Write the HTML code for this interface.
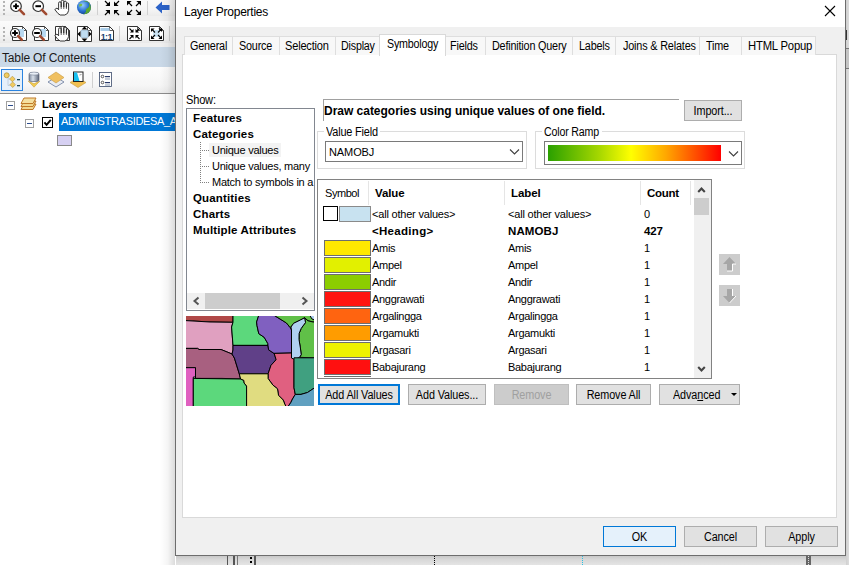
<!DOCTYPE html>
<html><head><meta charset="utf-8">
<style>
*{box-sizing:border-box}
html,body{margin:0;padding:0}
body{width:849px;height:565px;position:relative;overflow:hidden;background:#fff;font-family:"Liberation Sans",sans-serif;font-size:11px;color:#000}
.a{position:absolute}
svg.a{overflow:hidden}
.t{position:absolute;white-space:nowrap;line-height:12px}
</style></head><body>
<div class="a" style="left:0px;top:0px;width:176px;height:565px;background:#fff"></div>
<div class="a" style="left:0px;top:0px;width:176px;height:16px;background:linear-gradient(#fafafa,#f5f5f5 60%,#ebebeb)"></div>
<div class="a" style="left:0px;top:16px;width:176px;height:5px;background:#f0f0f0"></div>
<div class="a" style="left:0px;top:21px;width:176px;height:22px;background:linear-gradient(#fbfbfb,#f5f5f5 60%,#e9e9e9)"></div>
<div class="a" style="left:0px;top:43px;width:176px;height:4px;background:#f0f0f0"></div>
<div class="a" style="left:3px;top:1px;width:2px;height:2px;background:#b4b4b4"></div>
<div class="a" style="left:3px;top:5px;width:2px;height:2px;background:#b4b4b4"></div>
<div class="a" style="left:3px;top:9px;width:2px;height:2px;background:#b4b4b4"></div>
<div class="a" style="left:3px;top:13px;width:2px;height:2px;background:#b4b4b4"></div>
<div class="a" style="left:3px;top:27px;width:2px;height:2px;background:#b4b4b4"></div>
<div class="a" style="left:3px;top:31px;width:2px;height:2px;background:#b4b4b4"></div>
<div class="a" style="left:3px;top:35px;width:2px;height:2px;background:#b4b4b4"></div>
<div class="a" style="left:3px;top:39px;width:2px;height:2px;background:#b4b4b4"></div>
<div class="a" style="left:97px;top:1px;width:1px;height:14px;background:#d0d0d0"></div>
<div class="a" style="left:147px;top:1px;width:1px;height:14px;background:#d0d0d0"></div>
<div class="a" style="left:119px;top:26px;width:1px;height:15px;background:#d0d0d0"></div>
<div class="a" style="left:169px;top:26px;width:1px;height:15px;background:#d0d0d0"></div>
<svg class="a" style="left:0px;top:0px" width="176" height="17" viewBox="0 0 176 17"><circle cx="16" cy="6.2" r="5.3" fill="#fff" stroke="#333" stroke-width="1.2"/><path d="M19.71 9.91L23.95 14.149999999999999" stroke="#a04a30" stroke-width="2.6" stroke-linecap="round"/><path d="M13.2 6.2H18.8" stroke="#000" stroke-width="2"/><path d="M16 3.4000000000000004V9.0" stroke="#000" stroke-width="2"/><circle cx="38.2" cy="6.2" r="5.3" fill="#fff" stroke="#333" stroke-width="1.2"/><path d="M41.910000000000004 9.91L46.150000000000006 14.149999999999999" stroke="#a04a30" stroke-width="2.6" stroke-linecap="round"/><path d="M35.400000000000006 6.2H41.0" stroke="#000" stroke-width="2"/><g transform="translate(54 0)"><path d="M0.8 9.5L3 8L4.6 9.8V3.2Q4.6 1.8 5.9 1.8Q7.2 1.8 7.2 3.2V7.2V1.6Q7.2 0.3 8.5 0.3Q9.8 0.3 9.8 1.6V7.2V2.4Q9.8 1.1 11.1 1.1Q12.4 1.1 12.4 2.4V7.6V4Q12.4 2.9 13.5 2.9Q14.6 2.9 14.6 4V10.5Q14.2 14.2 10.8 15H6.2Q4.5 14.8 0.8 9.5Z" fill="#fff" stroke="#222" stroke-width="0.9" stroke-linejoin="round"/><path d="M7.2 7.2V9M9.8 7.2V9M12.4 7.6V9" stroke="#222" stroke-width="0.7"/></g><defs><radialGradient id="gl" cx="0.4" cy="0.35" r="0.7"><stop offset="0" stop-color="#9ad0ff"/><stop offset="0.6" stop-color="#2a70d0"/><stop offset="1" stop-color="#14408a"/></radialGradient></defs><circle cx="84" cy="7.3" r="7" fill="url(#gl)"/><path d="M83 1.5Q87 1 89 3Q90 6 88 8Q85 9 86 11.5Q85 14 83 14.3Q88 14.5 90.5 10Q91.5 5 88.5 2Q86 0.3 83 1.5Z" fill="#5aa830"/><path d="M79.5 4Q81.5 3 82.5 5Q81 7 79 6.5Z" fill="#7ac040"/><path d="M105 1L108.8 4.8" stroke="#000" stroke-width="1.2"/><path d="M110 6L105.4 6L110 1.4000000000000004Z" fill="#000"/><path d="M119 1L115.2 4.8" stroke="#000" stroke-width="1.2"/><path d="M114 6L118.6 6L114 1.4000000000000004Z" fill="#000"/><path d="M105 15L108.8 11.2" stroke="#000" stroke-width="1.2"/><path d="M110 10L105.4 10L110 14.6Z" fill="#000"/><path d="M119 15L115.2 11.2" stroke="#000" stroke-width="1.2"/><path d="M114 10L118.6 10L114 14.6Z" fill="#000"/><path d="M132 6L128.2 2.2" stroke="#000" stroke-width="1.2"/><path d="M127 1L131.6 1L127 5.6Z" fill="#000"/><path d="M136 6L139.8 2.2" stroke="#000" stroke-width="1.2"/><path d="M141 1L136.4 1L141 5.6Z" fill="#000"/><path d="M132 10L128.2 13.8" stroke="#000" stroke-width="1.2"/><path d="M127 15L131.6 15L127 10.4Z" fill="#000"/><path d="M136 10L139.8 13.8" stroke="#000" stroke-width="1.2"/><path d="M141 15L136.4 15L141 10.4Z" fill="#000"/><path d="M155.5 7.5L162 1.5V5H169.5V10H162V13.5Z" fill="#2b62c8"/></svg>
<svg class="a" style="left:0px;top:21px" width="176" height="22" viewBox="0 21 176 22"><path d="M12.5 26.5H22.5L26.5 30.5V40.5H12.5Z" fill="#fff" stroke="#333" stroke-width="1"/><path d="M22.5 26.5V30.5H26.5" fill="none" stroke="#333" stroke-width="0.8"/><rect x="16" y="29" width="8" height="8" fill="#b8d8f0"/><circle cx="15" cy="33" r="4.5" fill="#fff" stroke="#333" stroke-width="1.2"/><path d="M18.15 36.15L21.75 39.75" stroke="#a04a30" stroke-width="2.6" stroke-linecap="round"/><path d="M12.2 33H17.8" stroke="#000" stroke-width="2"/><path d="M15 30.2V35.8" stroke="#000" stroke-width="2"/><path d="M34.5 26.5H44.5L48.5 30.5V40.5H34.5Z" fill="#fff" stroke="#333" stroke-width="1"/><path d="M44.5 26.5V30.5H48.5" fill="none" stroke="#333" stroke-width="0.8"/><rect x="38" y="29" width="8" height="8" fill="#b8d8f0"/><circle cx="37" cy="33" r="4.5" fill="#fff" stroke="#333" stroke-width="1.2"/><path d="M40.15 36.15L43.75 39.75" stroke="#a04a30" stroke-width="2.6" stroke-linecap="round"/><path d="M34.2 33H39.8" stroke="#000" stroke-width="2"/><path d="M55.5 26.5H65.5L69.5 30.5V40.5H55.5Z" fill="#fff" stroke="#333" stroke-width="1"/><path d="M65.5 26.5V30.5H69.5" fill="none" stroke="#333" stroke-width="0.8"/><g transform="translate(54 26)"><path d="M0.8 9.5L3 8L4.6 9.8V3.2Q4.6 1.8 5.9 1.8Q7.2 1.8 7.2 3.2V7.2V1.6Q7.2 0.3 8.5 0.3Q9.8 0.3 9.8 1.6V7.2V2.4Q9.8 1.1 11.1 1.1Q12.4 1.1 12.4 2.4V7.6V4Q12.4 2.9 13.5 2.9Q14.6 2.9 14.6 4V10.5Q14.2 14.2 10.8 15H6.2Q4.5 14.8 0.8 9.5Z" fill="#fff" stroke="#222" stroke-width="0.9" stroke-linejoin="round"/><path d="M7.2 7.2V9M9.8 7.2V9M12.4 7.6V9" stroke="#222" stroke-width="0.7"/></g><path d="M77.5 26.5H87.5L91.5 30.5V41.5H77.5Z" fill="#fff" stroke="#333" stroke-width="1"/><path d="M87.5 26.5V30.5H91.5" fill="none" stroke="#333" stroke-width="0.8"/><rect x="81" y="30.5" width="7" height="7" fill="#c0dcf0" stroke="#90b0c8" stroke-width="0.6"/><path d="M84.5 26.5L87.5 29.5H81.5Z M84.5 41.5L87.5 38.5H81.5Z M77.5 34L80.5 31V37Z M91.5 34L88.5 31V37Z" fill="#000"/><path d="M99.5 26.5H109.5L113.5 30.5V40.5H99.5Z" fill="#fff" stroke="#333" stroke-width="1"/><path d="M109.5 26.5V30.5H113.5" fill="none" stroke="#333" stroke-width="0.8"/><rect x="100.5" y="28" width="9" height="3" fill="#a8cce8"/><text x="106.3" y="39.5" font-size="9" font-weight="bold" text-anchor="middle" fill="#1a4070" font-family="Liberation Sans" letter-spacing="-0.6">1:1</text><path d="M127.5 26.5H137.5L141.5 30.5V40.5H127.5Z" fill="#fff" stroke="#333" stroke-width="1"/><path d="M137.5 26.5V30.5H141.5" fill="none" stroke="#333" stroke-width="0.8"/><path d="M129.5 28.5L132.3 31.3" stroke="#000" stroke-width="1.1"/><path d="M133.5 32.5L129.9 32.5L133.5 28.9Z" fill="#000"/><path d="M139.5 28.5L136.7 31.3" stroke="#000" stroke-width="1.1"/><path d="M135.5 32.5L139.1 32.5L135.5 28.9Z" fill="#000"/><path d="M129.5 39L132.3 36.2" stroke="#000" stroke-width="1.1"/><path d="M133.5 35L129.9 35L133.5 38.6Z" fill="#000"/><path d="M139.5 39L136.7 36.2" stroke="#000" stroke-width="1.1"/><path d="M135.5 35L139.1 35L135.5 38.6Z" fill="#000"/><path d="M149.5 26.5H159.5L163.5 30.5V40.5H149.5Z" fill="#fff" stroke="#333" stroke-width="1"/><path d="M159.5 26.5V30.5H163.5" fill="none" stroke="#333" stroke-width="0.8"/><rect x="153" y="30" width="7" height="7" fill="#c8e0f0"/><path d="M155 32.5L152.2 29.7" stroke="#000" stroke-width="1.1"/><path d="M151 28.5L154.6 28.5L151 32.1Z" fill="#000"/><path d="M158 32.5L160.8 29.7" stroke="#000" stroke-width="1.1"/><path d="M162 28.5L158.4 28.5L162 32.1Z" fill="#000"/><path d="M155 35L152.2 37.8" stroke="#000" stroke-width="1.1"/><path d="M151 39L154.6 39L151 35.4Z" fill="#000"/><path d="M158 35L160.8 37.8" stroke="#000" stroke-width="1.1"/><path d="M162 39L158.4 39L162 35.4Z" fill="#000"/></svg>
<div class="a" style="left:0px;top:47px;width:176px;height:20px;background:#cad9e8"></div>
<div class="t" style="left:2px;top:52px;font-size:12px;letter-spacing:-0.15px;color:#1a1a1a;">Table Of Contents</div>
<div class="a" style="left:0px;top:67px;width:176px;height:26px;background:linear-gradient(#fdfdfd,#f6f6f6 70%,#ececec)"></div>
<div class="a" style="left:0px;top:93px;width:176px;height:1px;background:#8c8c8c"></div>
<div class="a" style="left:1px;top:69px;width:22px;height:22px;background:#e6f0fa;border:1px solid #2b84e0"></div>
<svg class="a" style="left:0px;top:67px" width="176" height="26" viewBox="0 67 176 26"><path d="M8 78V85.5H10M8 79H10" stroke="#b8c8dc" stroke-width="0.8" fill="none"/><circle cx="6.7" cy="75.3" r="2.5" fill="#f2cc60" stroke="#a88a30" stroke-width="0.7"/><path d="M12.4 76.2L15.2 79L12.4 81.8L9.6 79Z" fill="#f2cc60" stroke="#b09040" stroke-width="0.6"/><path d="M12.7 81.9L15.5 84.7L12.7 87.5L9.9 84.7Z" fill="#f2cc60" stroke="#b09040" stroke-width="0.6"/><rect x="17" y="79" width="3" height="1.3" fill="#1a4a5a"/><rect x="17" y="85" width="3" height="1.3" fill="#1a4a5a"/><defs><linearGradient id="cyl" x1="0" y1="0" x2="1" y2="0"><stop offset="0" stop-color="#7a869a"/><stop offset="0.4" stop-color="#d8e0ea"/><stop offset="1" stop-color="#5a6478"/></linearGradient></defs><path d="M28.2 81L34 87.2L39.9 81L34 83.8Z" fill="#f2cc50" stroke="#c8a040" stroke-width="0.6"/><rect x="29" y="72.5" width="10" height="9" rx="2" fill="url(#cyl)" stroke="#50586a" stroke-width="0.6"/><ellipse cx="34" cy="73.6" rx="4.6" ry="1.5" fill="#e8eef6" stroke="#6a7488" stroke-width="0.5"/><path d="M56 77L64 82L56 87L48 82Z" fill="#e8ecf4" stroke="#6a7a9a" stroke-width="0.8"/><path d="M56 72L64 77.5L56 83L48 77.5Z" fill="#f0c060" stroke="#c89a40" stroke-width="0.6"/><path d="M78 78L86 82.5L78 87.5L70 82.5Z" fill="#f0c050" stroke="#c89a40" stroke-width="0.6"/><rect x="73.5" y="72" width="9.5" height="9.5" fill="#fff" stroke="#222" stroke-width="1"/><path d="M74 72.5H77L79.5 81H74Z" fill="#18c0f0"/><path d="M79.5 75L81.5 74.5" stroke="#555" stroke-width="0.6"/><rect x="92" y="72" width="1" height="16" fill="#d0d0d0"/><rect x="99.5" y="72.5" width="12" height="14" fill="#fff" stroke="#3a4a6a" stroke-width="0.8"/><circle cx="102.5" cy="76.5" r="1.3" fill="none" stroke="#333" stroke-width="0.8"/><circle cx="102.5" cy="82.5" r="1.3" fill="none" stroke="#333" stroke-width="0.8"/><rect x="105" y="76" width="5" height="1.2" fill="#2a3a6a"/><rect x="105" y="78.5" width="5" height="1" fill="#8a9ab0"/><rect x="105" y="82" width="5" height="1.2" fill="#2a3a6a"/><rect x="105" y="84.5" width="5" height="1" fill="#8a9ab0"/></svg>
<div class="a" style="left:6px;top:101px;width:9px;height:9px;border:1px solid #a0a0a0;background:#fff"></div>
<div class="a" style="left:8px;top:105px;width:5px;height:1px;background:#2c4c8c"></div>
<svg class="a" style="left:18px;top:96px" width="22" height="16" viewBox="0 0 22 16"><g stroke="#c07a28" stroke-width="1" stroke-linejoin="round"><path d="M6 8H18L15 13.5H3Z" fill="#f2d890"/><path d="M6 5H18L15 10.5H3Z" fill="#f2d890"/><path d="M6 2H18L15 7.5H3Z" fill="#f5e0a0"/></g></svg>
<div class="t" style="left:42px;top:98px;font-size:11px;letter-spacing:0.1px;color:#000;font-weight:bold;">Layers</div>
<div class="a" style="left:25px;top:119px;width:9px;height:9px;border:1px solid #a0a0a0;background:#fff"></div>
<div class="a" style="left:27px;top:123px;width:5px;height:1px;background:#2c4c8c"></div>
<div class="a" style="left:42px;top:117px;width:11px;height:11px;border:1px solid #000;background:#fff"></div>
<svg class="a" style="left:42px;top:117px" width="11" height="11" viewBox="0 0 11 11"><path d="M2.4 5.3L4.6 7.8L8.8 2.8" stroke="#000" stroke-width="2" fill="none"/></svg>
<div class="a" style="left:59px;top:113px;width:117px;height:18px;background:#0078d7"></div>
<div class="t" style="left:61px;top:115px;font-size:11px;letter-spacing:-0.32px;color:#fff;">ADMINISTRASIDESA_A</div>
<div class="a" style="left:57px;top:135px;width:15px;height:11px;border:1px solid #8a8a8a;background:#d6d0f2"></div>
<div class="a" style="left:160px;top:0px;width:15px;height:565px;background:linear-gradient(90deg,rgba(0,0,0,0),rgba(0,0,0,0.04) 50%,rgba(0,0,0,0.14))"></div>
<div class="a" style="left:176px;top:556px;width:673px;height:9px;background:linear-gradient(#c8c8c8,#d8d8d8 40%,#e4e4e4)"></div>
<div class="a" style="left:227px;top:556px;width:1px;height:9px;background:#555"></div>
<div class="a" style="left:233px;top:556px;width:2px;height:9px;background:#555"></div>
<div class="a" style="left:237px;top:556px;width:1px;height:9px;background:#777"></div>
<div class="a" style="left:250px;top:557px;width:2px;height:2px;background:#000"></div>
<div class="a" style="left:250px;top:561px;width:2px;height:2px;background:#000"></div>
<div class="a" style="left:254px;top:556px;width:2px;height:9px;background:#555"></div>
<div class="a" style="left:434px;top:555px;width:1px;height:10px;border-left:1px dotted #000"></div>
<div class="a" style="left:582px;top:555px;width:1px;height:10px;border-left:1px dotted #2bc0e0"></div>
<div class="a" style="left:806px;top:555px;width:5px;height:10px;background:#666"></div>
<div class="a" style="left:808px;top:556px;width:1px;height:9px;border-left:1px dotted #ddd"></div>
<div class="a" style="left:846px;top:0px;width:3px;height:565px;background:linear-gradient(90deg,#d0d0d0,#dcdcdc)"></div>
<div class="a" style="left:846px;top:30px;width:1px;height:10px;background:#333"></div>
<div class="a" style="left:846px;top:48px;width:3px;height:1px;background:#777"></div>
<div class="a" style="left:846px;top:49px;width:3px;height:19px;background:#c4c4c4"></div>
<div class="a" style="left:846px;top:68px;width:3px;height:1px;background:#777"></div>
<div class="a" style="left:175px;top:0px;width:671px;height:556px;background:#f0f0f0;border:1px solid #6d6d6d;border-top:none"></div>
<div class="a" style="left:176px;top:0px;width:669px;height:27px;background:#fff"></div>
<div class="t" style="left:184px;top:6px;font-size:12px;letter-spacing:-0.25px;color:#000;">Layer Properties</div>
<svg class="a" style="left:824px;top:5px" width="12" height="12" viewBox="0 0 12 12"><path d="M1 1L11 11M11 1L1 11" stroke="#000" stroke-width="1.1"/></svg>
<div class="a" style="left:182px;top:54px;width:655px;height:464px;background:#fff;border:1px solid #d9d9d9"></div>
<div class="a" style="left:184px;top:36px;width:49px;height:19px;background:#f8f8f8;border:1px solid #dedede;border-bottom:none"></div>
<div class="t" style="left:190px;top:40px;font-size:12px;letter-spacing:-0.2px;transform:scaleX(0.9);transform-origin:0 0">General</div>
<div class="a" style="left:232px;top:36px;width:48px;height:19px;background:#f8f8f8;border:1px solid #dedede;border-bottom:none"></div>
<div class="t" style="left:239px;top:40px;font-size:12px;letter-spacing:-0.2px;transform:scaleX(0.9);transform-origin:0 0">Source</div>
<div class="a" style="left:279px;top:36px;width:57px;height:19px;background:#f8f8f8;border:1px solid #dedede;border-bottom:none"></div>
<div class="t" style="left:285px;top:40px;font-size:12px;letter-spacing:-0.2px;transform:scaleX(0.92);transform-origin:0 0">Selection</div>
<div class="a" style="left:335px;top:36px;width:45px;height:19px;background:#f8f8f8;border:1px solid #dedede;border-bottom:none"></div>
<div class="t" style="left:341px;top:40px;font-size:12px;letter-spacing:-0.2px;transform:scaleX(0.89);transform-origin:0 0">Display</div>
<div class="a" style="left:445px;top:36px;width:41px;height:19px;background:#f8f8f8;border:1px solid #dedede;border-bottom:none"></div>
<div class="t" style="left:450px;top:40px;font-size:12px;letter-spacing:-0.2px;transform:scaleX(0.9);transform-origin:0 0">Fields</div>
<div class="a" style="left:485px;top:36px;width:88px;height:19px;background:#f8f8f8;border:1px solid #dedede;border-bottom:none"></div>
<div class="t" style="left:492px;top:40px;font-size:12px;letter-spacing:-0.2px;transform:scaleX(0.9);transform-origin:0 0">Definition Query</div>
<div class="a" style="left:572px;top:36px;width:44px;height:19px;background:#f8f8f8;border:1px solid #dedede;border-bottom:none"></div>
<div class="t" style="left:579px;top:40px;font-size:12px;letter-spacing:-0.2px;transform:scaleX(0.9);transform-origin:0 0">Labels</div>
<div class="a" style="left:615px;top:36px;width:85px;height:19px;background:#f8f8f8;border:1px solid #dedede;border-bottom:none"></div>
<div class="t" style="left:623px;top:40px;font-size:12px;letter-spacing:-0.2px;transform:scaleX(0.905);transform-origin:0 0">Joins &amp; Relates</div>
<div class="a" style="left:699px;top:36px;width:43px;height:19px;background:#f8f8f8;border:1px solid #dedede;border-bottom:none"></div>
<div class="t" style="left:706px;top:40px;font-size:12px;letter-spacing:-0.2px;transform:scaleX(0.9);transform-origin:0 0">Time</div>
<div class="a" style="left:741px;top:36px;width:75px;height:19px;background:#f8f8f8;border:1px solid #dedede;border-bottom:none"></div>
<div class="t" style="left:748px;top:40px;font-size:12px;letter-spacing:-0.2px;transform:scaleX(0.94);transform-origin:0 0">HTML Popup</div>
<div class="a" style="left:379px;top:34px;width:67px;height:22px;background:#fff;border:1px solid #d9d9d9;border-bottom:none"></div>
<div class="t" style="left:387px;top:38px;font-size:12px;letter-spacing:-0.2px;transform:scaleX(0.89);transform-origin:0 0">Symbology</div>
<div class="t" style="left:186px;top:94px;font-size:12px;letter-spacing:-0.2px;transform:scaleX(0.92);transform-origin:0 0">Show:</div>
<div class="a" style="left:186px;top:108px;width:129px;height:203px;border:1px solid #828790;background:#fff"></div>
<div class="t" style="left:193px;top:112px;font-size:11.5px;letter-spacing:0.15px;color:#000;font-weight:bold;">Features</div>
<div class="t" style="left:193px;top:128px;font-size:11.5px;letter-spacing:0.15px;color:#000;font-weight:bold;">Categories</div>
<div class="a" style="left:209px;top:143px;width:72px;height:14px;background:#f3f3f3"></div>
<div class="t" style="left:212px;top:144px;font-size:11px;letter-spacing:-0.25px;color:#000;">Unique values</div>
<div class="t" style="left:212px;top:160px;font-size:11px;letter-spacing:-0.25px;color:#000;">Unique values, many</div>
<div class="t" style="left:212px;top:176px;width:102px;overflow:hidden;letter-spacing:-0.25px">Match to symbols in a</div>
<div class="t" style="left:193px;top:192px;font-size:11.5px;letter-spacing:0.15px;color:#000;font-weight:bold;">Quantities</div>
<div class="t" style="left:193px;top:208px;font-size:11.5px;letter-spacing:0.15px;color:#000;font-weight:bold;">Charts</div>
<div class="t" style="left:193px;top:224px;font-size:11.5px;letter-spacing:0.15px;color:#000;font-weight:bold;">Multiple Attributes</div>
<svg class="a" style="left:0px;top:0px" width="849" height="565" viewBox="0 0 849 565"><rect x="200" y="142" width="1" height="1" fill="#808080"/><rect x="200" y="144" width="1" height="1" fill="#808080"/><rect x="200" y="146" width="1" height="1" fill="#808080"/><rect x="200" y="148" width="1" height="1" fill="#808080"/><rect x="200" y="150" width="1" height="1" fill="#808080"/><rect x="200" y="152" width="1" height="1" fill="#808080"/><rect x="200" y="154" width="1" height="1" fill="#808080"/><rect x="200" y="156" width="1" height="1" fill="#808080"/><rect x="200" y="158" width="1" height="1" fill="#808080"/><rect x="200" y="160" width="1" height="1" fill="#808080"/><rect x="200" y="162" width="1" height="1" fill="#808080"/><rect x="200" y="164" width="1" height="1" fill="#808080"/><rect x="200" y="166" width="1" height="1" fill="#808080"/><rect x="200" y="168" width="1" height="1" fill="#808080"/><rect x="200" y="170" width="1" height="1" fill="#808080"/><rect x="200" y="172" width="1" height="1" fill="#808080"/><rect x="200" y="174" width="1" height="1" fill="#808080"/><rect x="200" y="176" width="1" height="1" fill="#808080"/><rect x="200" y="178" width="1" height="1" fill="#808080"/><rect x="200" y="180" width="1" height="1" fill="#808080"/><rect x="200" y="182" width="1" height="1" fill="#808080"/><rect x="202" y="150" width="1" height="1" fill="#808080"/><rect x="204" y="150" width="1" height="1" fill="#808080"/><rect x="206" y="150" width="1" height="1" fill="#808080"/><rect x="208" y="150" width="1" height="1" fill="#808080"/><rect x="202" y="166" width="1" height="1" fill="#808080"/><rect x="204" y="166" width="1" height="1" fill="#808080"/><rect x="206" y="166" width="1" height="1" fill="#808080"/><rect x="208" y="166" width="1" height="1" fill="#808080"/><rect x="202" y="182" width="1" height="1" fill="#808080"/><rect x="204" y="182" width="1" height="1" fill="#808080"/><rect x="206" y="182" width="1" height="1" fill="#808080"/><rect x="208" y="182" width="1" height="1" fill="#808080"/></svg>
<div class="a" style="left:187px;top:293px;width:127px;height:16px;background:#f0f0f0"></div>
<div class="a" style="left:205px;top:293px;width:75px;height:16px;background:#cdcdcd"></div>
<svg class="a" style="left:191px;top:296px" width="10" height="10" viewBox="0 0 10 10"><path d="M7.5 1.5L3.5 5L7.5 8.5" stroke="#555" stroke-width="2" fill="none"/></svg>
<svg class="a" style="left:300px;top:296px" width="10" height="10" viewBox="0 0 10 10"><path d="M2.5 1.5L6.5 5L2.5 8.5" stroke="#555" stroke-width="2" fill="none"/></svg>
<svg class="a" style="left:186px;top:316px" width="128" height="90" viewBox="186 316 128 90"><polygon points="184,314 233,314 233,322.3 210,322 184,320.5" fill="#b04848" stroke="#000" stroke-width="1" stroke-linejoin="round"/><polygon points="184,320.5 210,322 233,322.3 231.6,327 233,345.4 233,350 232,354 221,349.5 199,349.5 197.6,348.4 184,348.4" fill="#e0a0c0" stroke="#000" stroke-width="1" stroke-linejoin="round"/><polygon points="184,348.4 197.6,348.4 199,349.5 221,349.5 232,354 234.4,358 239.3,374 240.6,379 222,378.4 195.5,378.4 195.5,367.7 184,367.7" fill="#a86080" stroke="#000" stroke-width="1" stroke-linejoin="round"/><polygon points="184,367.7 195.5,367.7 195.5,377 193.3,377 193.3,408 184,408" fill="#e060c0" stroke="#000" stroke-width="1" stroke-linejoin="round"/><polygon points="193.3,378.4 240.6,379 243.8,380.3 244.2,383.1 246.6,386 246.6,408 193.3,408" fill="#5cd87c" stroke="#000" stroke-width="1" stroke-linejoin="round"/><polygon points="233,314 259.2,314 256.6,322 257,325.6 258.8,333.7 264.2,337.3 267.8,343.5 268,345.4 233,345.4 231.6,327 233,322.3" fill="#5cd87c" stroke="#000" stroke-width="1" stroke-linejoin="round"/><polygon points="233,345.4 268,345.4 268.6,349.8 274,353.4 274.7,355 276.1,359.7 271,365.3 268.1,373.8 239.3,373.8 234.4,358 232,354 233,350" fill="#604088" stroke="#000" stroke-width="1" stroke-linejoin="round"/><polygon points="259.2,314 272,314 286.5,323 290,327.4 291.5,330 291.5,353 274,353.4 268.6,349.8 268,345.4 267.8,343.5 264.2,337.3 258.8,333.7 257,325.6 256.6,322" fill="#8060c0" stroke="#000" stroke-width="1" stroke-linejoin="round"/><polygon points="272,314 316,314 316,322 313,322 308,320.8 304.6,317.8 300.4,320 293.6,323.3 291,327 290,327.4 286.5,323" fill="#60c048" stroke="#000" stroke-width="1" stroke-linejoin="round"/><polygon points="304.6,317.8 308,320.8 313,322 316,322 316,358 299.5,357.3 301.2,354.7 300.4,348 299,339.5 299.1,333.5 301.2,328.4 305.5,322.5" fill="#60c048" stroke="#000" stroke-width="1" stroke-linejoin="round"/><polygon points="291,327 293.6,323.3 300.4,320 304.6,317.8 305.5,322.5 301.2,328.4 299.1,333.5 299,339.5 300.4,348 301.2,354.7 299.5,357.3 294.4,359.8 291.5,358 291.5,330" fill="#b0d0f0" stroke="#000" stroke-width="1" stroke-linejoin="round"/><polygon points="308.9,314 316,314 316,320.5 312,319" fill="#b0d0f0" stroke="#000" stroke-width="1" stroke-linejoin="round"/><polygon points="274,353.4 291.5,353 291.5,358 294.6,359.7 294,360.6 294,387.8 295.3,394.4 292.5,399 290.7,402.8 286.9,408 285,404.7 283.2,400 278.5,395.3 277.5,388.8 272.8,385 268.1,378.5 268.1,373.8 271,365.3 276.1,359.7 274.7,355" fill="#e06080" stroke="#000" stroke-width="1" stroke-linejoin="round"/><polygon points="294,357.8 316,357.8 316,386.9 307.5,392.5 301,394.4 295.3,394.4 294,387.8" fill="#40a080" stroke="#000" stroke-width="1" stroke-linejoin="round"/><polygon points="295.3,394.4 301,394.4 307.5,392.5 316,386.9 316,408 286.9,408 290.7,402.8 292.5,399" fill="#60a0c0" stroke="#000" stroke-width="1" stroke-linejoin="round"/><polygon points="239.3,373.8 268.1,373.8 268.1,378.5 272.8,385 277.5,388.8 278.5,395.3 283.2,400 285,404.7 286.9,408 246.6,408 246.6,386 244.2,383.1 243.8,380.3 240.6,379" fill="#e0dc80" stroke="#000" stroke-width="1" stroke-linejoin="round"/></svg>
<div class="a" style="left:323px;top:99px;width:356px;height:1px;background:#a0a0a0"></div>
<div class="a" style="left:323px;top:99px;width:1px;height:22px;background:#a0a0a0"></div>
<div class="t" style="left:324px;top:105px;font-size:12px;letter-spacing:-0.02px;color:#000;font-weight:bold;">Draw categories using unique values of one field.</div>
<div class="a" style="left:684px;top:100px;width:58px;height:21px;background:#e1e1e1;border:1px solid #adadad;"></div>
<div class="t" style="left:684px;top:105px;width:58px;text-align:center;font-size:12px;letter-spacing:-0.1px;transform:scaleX(0.9);transform-origin:50% 0;">Import...</div>
<div class="a" style="left:317px;top:131px;width:210px;height:38px;border:1px solid #dcdcdc"></div>
<div class="a" style="left:324px;top:128px;width:56px;height:8px;background:#fff"></div>
<div class="t" style="left:326px;top:126px;font-size:12px;letter-spacing:-0.2px;transform:scaleX(0.91);transform-origin:0 0">Value Field</div>
<div class="a" style="left:325px;top:141px;width:198px;height:21px;border:1px solid #7a7a7a;background:#fff"></div>
<div class="t" style="left:329px;top:146px;font-size:11px;letter-spacing:-0.1px;color:#000;">NAMOBJ</div>
<svg class="a" style="left:509px;top:148px" width="11" height="8" viewBox="0 0 11 8"><path d="M1 1.5L5.5 6L10 1.5" stroke="#404040" stroke-width="1.1" fill="none"/></svg>
<div class="a" style="left:535px;top:131px;width:210px;height:38px;border:1px solid #dcdcdc"></div>
<div class="a" style="left:542px;top:128px;width:60px;height:8px;background:#fff"></div>
<div class="t" style="left:544px;top:126px;font-size:12px;letter-spacing:-0.2px;transform:scaleX(0.885);transform-origin:0 0">Color Ramp</div>
<div class="a" style="left:544px;top:141px;width:198px;height:24px;border:1px solid #7a7a7a;background:#fff"></div>
<div class="a" style="left:548px;top:145px;width:173px;height:16px;background:linear-gradient(90deg,#2aa000 0%,#a8d800 30%,#ffff00 48%,#ffa800 68%,#ff4000 88%,#ff0000 100%)"></div>
<svg class="a" style="left:728px;top:150px" width="11" height="8" viewBox="0 0 11 8"><path d="M1 1.5L5.5 6L10 1.5" stroke="#404040" stroke-width="1.1" fill="none"/></svg>
<div class="a" style="left:317px;top:179px;width:395px;height:200px;border:1px solid #828282;background:#fff"></div>
<div class="a" style="left:368px;top:181px;width:1px;height:24px;background:#e5e5e5"></div>
<div class="a" style="left:504px;top:181px;width:1px;height:24px;background:#e5e5e5"></div>
<div class="a" style="left:640px;top:181px;width:1px;height:24px;background:#e5e5e5"></div>
<div class="a" style="left:690px;top:181px;width:1px;height:24px;background:#e5e5e5"></div>
<div class="t" style="left:325px;top:187px;font-size:11px;letter-spacing:-0.45px;color:#000;">Symbol</div>
<div class="t" style="left:375px;top:187px;font-size:11.5px;letter-spacing:-0.1px;color:#000;font-weight:bold;">Value</div>
<div class="t" style="left:511px;top:187px;font-size:11.5px;letter-spacing:-0.1px;color:#000;font-weight:bold;">Label</div>
<div class="t" style="left:647px;top:187px;font-size:11.5px;letter-spacing:-0.3px;color:#000;font-weight:bold;">Count</div>
<div class="a" style="left:323px;top:206px;width:15px;height:15px;border:1px solid #000;background:#fff"></div>
<div class="a" style="left:339px;top:206px;width:32px;height:16px;border:1px solid #8a8a8a;background:#c8e2f0"></div>
<div class="t" style="left:372px;top:208px;font-size:11px;letter-spacing:-0.2px;color:#000;">&lt;all other values&gt;</div>
<div class="t" style="left:508px;top:208px;font-size:11px;letter-spacing:-0.2px;color:#000;">&lt;all other values&gt;</div>
<div class="t" style="left:644px;top:208px;font-size:11px;letter-spacing:-0.3px;color:#000;">0</div>
<div class="t" style="left:372px;top:225px;font-size:11.5px;letter-spacing:0.3px;color:#000;font-weight:bold;">&lt;Heading&gt;</div>
<div class="t" style="left:508px;top:225px;font-size:11.5px;letter-spacing:0.1px;color:#000;font-weight:bold;">NAMOBJ</div>
<div class="t" style="left:644px;top:225px;font-size:11.5px;letter-spacing:-0.1px;color:#000;font-weight:bold;">427</div>
<div class="a" style="left:324px;top:240px;width:47px;height:16px;border:1px solid #6e6e6e;background:#ffe800"></div>
<div class="t" style="left:372px;top:242px;font-size:11px;letter-spacing:-0.3px;color:#000;">Amis</div>
<div class="t" style="left:508px;top:242px;font-size:11px;letter-spacing:-0.3px;color:#000;">Amis</div>
<div class="t" style="left:644px;top:242px;font-size:11px;letter-spacing:-0.3px;color:#000;">1</div>
<div class="a" style="left:324px;top:257px;width:47px;height:16px;border:1px solid #6e6e6e;background:#e2f000"></div>
<div class="t" style="left:372px;top:259px;font-size:11px;letter-spacing:-0.3px;color:#000;">Ampel</div>
<div class="t" style="left:508px;top:259px;font-size:11px;letter-spacing:-0.3px;color:#000;">Ampel</div>
<div class="t" style="left:644px;top:259px;font-size:11px;letter-spacing:-0.3px;color:#000;">1</div>
<div class="a" style="left:324px;top:274px;width:47px;height:16px;border:1px solid #6e6e6e;background:#8ccd00"></div>
<div class="t" style="left:372px;top:276px;font-size:11px;letter-spacing:-0.3px;color:#000;">Andir</div>
<div class="t" style="left:508px;top:276px;font-size:11px;letter-spacing:-0.3px;color:#000;">Andir</div>
<div class="t" style="left:644px;top:276px;font-size:11px;letter-spacing:-0.3px;color:#000;">1</div>
<div class="a" style="left:324px;top:291px;width:47px;height:16px;border:1px solid #6e6e6e;background:#ff1410"></div>
<div class="t" style="left:372px;top:293px;font-size:11px;letter-spacing:-0.3px;color:#000;">Anggrawati</div>
<div class="t" style="left:508px;top:293px;font-size:11px;letter-spacing:-0.3px;color:#000;">Anggrawati</div>
<div class="t" style="left:644px;top:293px;font-size:11px;letter-spacing:-0.3px;color:#000;">1</div>
<div class="a" style="left:324px;top:308px;width:47px;height:16px;border:1px solid #6e6e6e;background:#ff6410"></div>
<div class="t" style="left:372px;top:310px;font-size:11px;letter-spacing:-0.3px;color:#000;">Argalingga</div>
<div class="t" style="left:508px;top:310px;font-size:11px;letter-spacing:-0.3px;color:#000;">Argalingga</div>
<div class="t" style="left:644px;top:310px;font-size:11px;letter-spacing:-0.3px;color:#000;">1</div>
<div class="a" style="left:324px;top:325px;width:47px;height:16px;border:1px solid #6e6e6e;background:#ff9c00"></div>
<div class="t" style="left:372px;top:327px;font-size:11px;letter-spacing:-0.3px;color:#000;">Argamukti</div>
<div class="t" style="left:508px;top:327px;font-size:11px;letter-spacing:-0.3px;color:#000;">Argamukti</div>
<div class="t" style="left:644px;top:327px;font-size:11px;letter-spacing:-0.3px;color:#000;">1</div>
<div class="a" style="left:324px;top:342px;width:47px;height:16px;border:1px solid #6e6e6e;background:#eef200"></div>
<div class="t" style="left:372px;top:344px;font-size:11px;letter-spacing:-0.3px;color:#000;">Argasari</div>
<div class="t" style="left:508px;top:344px;font-size:11px;letter-spacing:-0.3px;color:#000;">Argasari</div>
<div class="t" style="left:644px;top:344px;font-size:11px;letter-spacing:-0.3px;color:#000;">1</div>
<div class="a" style="left:324px;top:359px;width:47px;height:16px;border:1px solid #6e6e6e;background:#ff1010"></div>
<div class="t" style="left:372px;top:361px;font-size:11px;letter-spacing:-0.3px;color:#000;">Babajurang</div>
<div class="t" style="left:508px;top:361px;font-size:11px;letter-spacing:-0.3px;color:#000;">Babajurang</div>
<div class="t" style="left:644px;top:361px;font-size:11px;letter-spacing:-0.3px;color:#000;">1</div>
<div class="a" style="left:324px;top:376px;width:47px;height:1px;background:#6e6e6e"></div>
<div class="a" style="left:694px;top:180px;width:17px;height:198px;background:#f0f0f0"></div>
<div class="a" style="left:694px;top:198px;width:15px;height:17px;background:#cdcdcd"></div>
<svg class="a" style="left:697px;top:186px" width="9" height="8" viewBox="0 0 9 8"><path d="M1.2 6L4.5 2.6L7.8 6" stroke="#444" stroke-width="2.1" fill="none"/></svg>
<svg class="a" style="left:697px;top:365px" width="9" height="8" viewBox="0 0 9 8"><path d="M1.2 2L4.5 5.4L7.8 2" stroke="#444" stroke-width="2.1" fill="none"/></svg>
<div class="a" style="left:719px;top:254px;width:21px;height:21px;background:#cccccc"></div>
<div class="a" style="left:719px;top:285px;width:21px;height:21px;background:#cccccc"></div>
<svg class="a" style="left:719px;top:254px" width="21" height="21" viewBox="0 0 21 21"><path d="M10.5 3L17 10H13.5V17H8V10H4Z" fill="#a6a6a6"/><path d="M13.5 10H17M13.5 10V17H8" stroke="#fff" stroke-width="1" fill="none"/></svg>
<svg class="a" style="left:719px;top:285px" width="21" height="21" viewBox="0 0 21 21"><path d="M10.5 18L17 11H13.5V4H8V11H4Z" fill="#a6a6a6"/><path d="M17 11L10.5 18M13.5 4V11" stroke="#fff" stroke-width="1" fill="none"/></svg>
<div class="a" style="left:318px;top:384px;width:82px;height:21px;background:#e1e1e1;border:1px solid #adadad;border:2px solid #0078d7"></div>
<div class="t" style="left:318px;top:389px;width:82px;text-align:center;font-size:12px;letter-spacing:-0.1px;transform:scaleX(0.9);transform-origin:50% 0;">Add All Values</div>
<div class="a" style="left:408px;top:384px;width:78px;height:21px;background:#e1e1e1;border:1px solid #adadad;"></div>
<div class="t" style="left:408px;top:389px;width:78px;text-align:center;font-size:12px;letter-spacing:-0.1px;transform:scaleX(0.9);transform-origin:50% 0;">Add Values...</div>
<div class="a" style="left:494px;top:384px;width:75px;height:21px;background:#e1e1e1;border:1px solid #adadad;background:#cccccc;border-color:#bfbfbf"></div>
<div class="t" style="left:494px;top:389px;width:75px;text-align:center;font-size:12px;letter-spacing:-0.1px;transform:scaleX(0.9);transform-origin:50% 0;color:#a0a0a0">Remove</div>
<div class="a" style="left:576px;top:384px;width:75px;height:21px;background:#e1e1e1;border:1px solid #adadad;"></div>
<div class="t" style="left:576px;top:389px;width:75px;text-align:center;font-size:12px;letter-spacing:-0.1px;transform:scaleX(0.9);transform-origin:50% 0;">Remove All</div>
<div class="a" style="left:659px;top:384px;width:81px;height:21px;background:#e1e1e1;border:1px solid #adadad"></div>
<div class="t" style="left:673px;top:389px;font-size:12px;letter-spacing:-0.1px;transform:scaleX(0.9);transform-origin:0 0">Adva<u>n</u>ced</div>
<svg class="a" style="left:731px;top:393px" width="7" height="4" viewBox="0 0 7 4"><path d="M0 0H6L3 3Z" fill="#000"/></svg>
<div class="a" style="left:603px;top:526px;width:73px;height:21px;background:#e1e1e1;border:1px solid #adadad;background:#e5f1fb;border-color:#0078d7"></div>
<div class="t" style="left:603px;top:531px;width:73px;text-align:center;font-size:12px;letter-spacing:-0.1px;transform:scaleX(0.9);transform-origin:50% 0;">OK</div>
<div class="a" style="left:684px;top:526px;width:73px;height:21px;background:#e1e1e1;border:1px solid #adadad;"></div>
<div class="t" style="left:684px;top:531px;width:73px;text-align:center;font-size:12px;letter-spacing:-0.1px;transform:scaleX(0.9);transform-origin:50% 0;">Cancel</div>
<div class="a" style="left:765px;top:526px;width:73px;height:21px;background:#e1e1e1;border:1px solid #adadad;"></div>
<div class="t" style="left:765px;top:531px;width:73px;text-align:center;font-size:12px;letter-spacing:-0.1px;transform:scaleX(0.9);transform-origin:50% 0;">Apply</div>
</body></html>
